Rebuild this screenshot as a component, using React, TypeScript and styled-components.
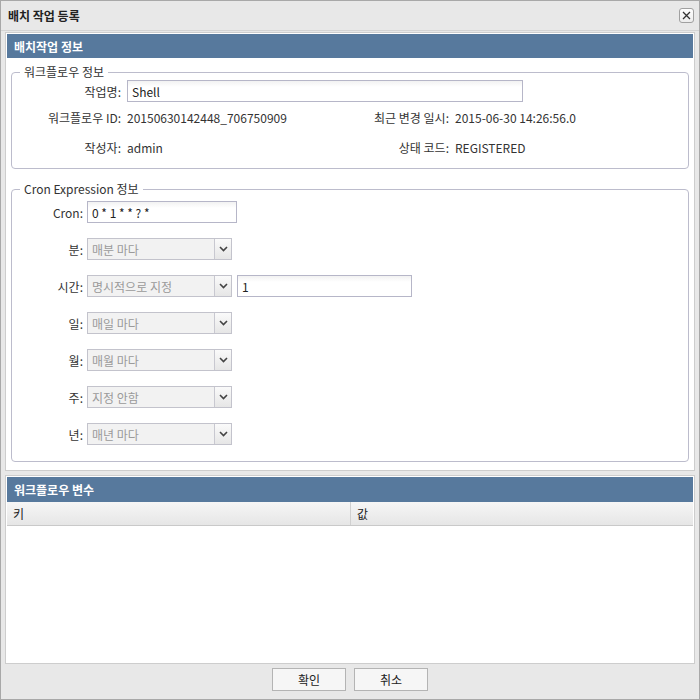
import styled, { createGlobalStyle } from 'styled-components';

const GlobalStyle = createGlobalStyle`
  html, body {
    margin: 0;
    padding: 0;
    background: #ffffff;
  }
  body {
    font-family: "Noto Sans CJK KR", "Liberation Sans", sans-serif;
    font-size: 12px;
    color: #333333;
  }
  * {
    box-sizing: border-box;
  }
`;

const Dialog = styled.div`
  width: 700px;
  height: 700px;
  display: flex;
  flex-direction: column;
  border: 1px solid #a8a8a8;
  background: #e8e8e8;
`;

const TitleBar = styled.div`
  height: 30px;
  flex: none;
  display: flex;
  align-items: center;
  justify-content: space-between;
  padding: 0 5px 0 7px;
  border-bottom: 1px solid #d4d4d4;
  font-weight: bold;
  color: #222222;
`;

const CloseButton = styled.button`
  width: 15px;
  height: 15px;
  padding: 0;
  display: flex;
  align-items: center;
  justify-content: center;
  border: 1px solid #a0a0a0;
  border-radius: 3px;
  background: linear-gradient(#ffffff, #ececec);
  cursor: pointer;
`;

const Body = styled.div`
  flex: 1;
  display: flex;
  flex-direction: column;
  padding: 1px 4px 0 4px;
`;

const Panel = styled.section<{ $grow?: boolean }>`
  background: #ffffff;
  border: 1px solid #cdcdcd;
  padding: 1px;
  ${(props) => (props.$grow ? 'flex: 1; display: flex; flex-direction: column;' : '')}
  & + & {
    margin-top: 4px;
  }
`;

const PanelHeader = styled.h2<{ $height?: number }>`
  margin: 0;
  height: ${(props) => props.$height ?? 24}px;
  display: flex;
  align-items: center;
  padding: 0 7px;
  background: #57799d;
  color: #ffffff;
  font-size: 12px;
  font-weight: bold;
`;

const FieldSet = styled.fieldset<{ $top: number; $pad: string }>`
  margin: ${(props) => props.$top}px 4px 0 4px;
  padding: ${(props) => props.$pad};
  border: 1px solid #bcbccc;
  border-radius: 4px;
  min-width: 0;

  legend {
    margin-left: 8px;
    padding: 0 4px;
    line-height: 14px;
    color: #333333;
  }
`;

const InfoGrid = styled.div`
  display: grid;
  grid-template-columns: 109px 206px 110px 1fr;
  grid-template-rows: 24px 28px 32px;
  column-gap: 6px;
  align-items: center;
`;

const Label = styled.span`
  text-align: right;
  white-space: nowrap;
`;

const Value = styled.span`
  white-space: nowrap;
`;

const WideCell = styled.div`
  grid-column: span 3;
`;

const TextInput = styled.div<{ $width: number }>`
  width: ${(props) => props.$width}px;
  height: 22px;
  display: flex;
  align-items: center;
  padding: 0 4px;
  border: 1px solid #b6b6c8;
  background: linear-gradient(#f2f2f2, #ffffff 6px);
  color: #222222;
`;

const CronRows = styled.div`
  display: flex;
  flex-direction: column;
  gap: 15px;
`;

const CronRow = styled.div`
  display: flex;
  align-items: center;
  height: 22px;
`;

const CronLabel = styled.span`
  width: 71px;
  margin-right: 4px;
  text-align: right;
`;

const Select = styled.div`
  width: 145px;
  height: 22px;
  display: flex;
  border: 1px solid #c3c3cc;
  background: #f2f2f2;
  color: #9a9a9a;
  & + div {
    margin-left: 5px;
  }
`;

const SelectText = styled.span`
  flex: 1;
  display: flex;
  align-items: center;
  padding: 0 4px;
`;

const SelectArrow = styled.span`
  width: 17px;
  display: flex;
  align-items: center;
  justify-content: center;
  border-left: 1px solid #c8c8d0;
  background: linear-gradient(#fafafa, #e6e6e6);
`;

const Spacer = styled.div`
  height: 7px;
`;

const VarHeaderRow = styled.div`
  display: grid;
  grid-template-columns: 343px 1fr;
  height: 24px;
  background: linear-gradient(#f6f6f6, #e6e6e6);
  border-bottom: 1px solid #c9c9c9;
`;

const VarHeaderCell = styled.div`
  display: flex;
  align-items: center;
  padding: 0 6px;
  color: #222222;
  & + & {
    border-left: 1px solid #d0d0d0;
  }
`;

const VarBody = styled.div`
  flex: 1;
`;

const Footer = styled.div`
  height: 35px;
  flex: none;
  display: flex;
  justify-content: center;
  align-items: flex-start;
  gap: 8px;
  padding-top: 4px;
`;

const Button = styled.button`
  width: 74px;
  height: 23px;
  padding: 0;
  border: 1px solid #b4b4b4;
  background: #f6f6f6;
  font-family: inherit;
  font-size: 12px;
  color: #222222;
  cursor: pointer;
`;

const Chevron = () => (
  <svg width="9" height="6" viewBox="0 0 9 6">
    <path d="M1 1 L4.5 4.5 L8 1" fill="none" stroke="#444" strokeWidth="1.6" />
  </svg>
);

const cronSelects = [
  { label: '분', value: '매분 마다' },
  { label: '시간', value: '명시적으로 지정', extra: '1' },
  { label: '일', value: '매일 마다' },
  { label: '월', value: '매월 마다' },
  { label: '주', value: '지정 안함' },
  { label: '년', value: '매년 마다' },
];

export default function App() {
  return (
    <>
      <GlobalStyle />
      <Dialog>
        <TitleBar>
          <span>배치 작업 등록</span>
          <CloseButton aria-label="닫기">
            <svg width="9" height="9" viewBox="0 0 9 9">
              <path d="M1 1 L8 8 M8 1 L1 8" stroke="#333" strokeWidth="1.3" />
            </svg>
          </CloseButton>
        </TitleBar>
        <Body>
          <Panel>
            <PanelHeader>배치작업 정보</PanelHeader>
            <FieldSet $top={7} $pad="0 0 5px 0">
              <legend>워크플로우 정보</legend>
              <InfoGrid>
                <Label>작업명:</Label>
                <WideCell>
                  <TextInput $width={396}>Shell</TextInput>
                </WideCell>
                <Label>워크플로우 ID:</Label>
                <Value>20150630142448_706750909</Value>
                <Label>최근 변경 일시:</Label>
                <Value>2015-06-30 14:26:56.0</Value>
                <Label>작성자:</Label>
                <Value>admin</Value>
                <Label>상태 코드:</Label>
                <Value>REGISTERED</Value>
              </InfoGrid>
            </FieldSet>
            <FieldSet $top={13} $pad="5px 0 16px 0">
              <legend>Cron Expression 정보</legend>
              <CronRows>
                <CronRow>
                  <CronLabel>Cron:</CronLabel>
                  <TextInput $width={150}>0 * 1 * * ? *</TextInput>
                </CronRow>
                {cronSelects.map((item) => (
                  <CronRow key={item.label}>
                    <CronLabel>{item.label}:</CronLabel>
                    <Select>
                      <SelectText>{item.value}</SelectText>
                      <SelectArrow>
                        <Chevron />
                      </SelectArrow>
                    </Select>
                    {item.extra && <TextInput $width={175}>{item.extra}</TextInput>}
                  </CronRow>
                ))}
              </CronRows>
            </FieldSet>
            <Spacer />
          </Panel>
          <Panel $grow>
            <PanelHeader $height={25}>워크플로우 변수</PanelHeader>
            <VarHeaderRow>
              <VarHeaderCell>키</VarHeaderCell>
              <VarHeaderCell>값</VarHeaderCell>
            </VarHeaderRow>
            <VarBody />
          </Panel>
        </Body>
        <Footer>
          <Button>확인</Button>
          <Button>취소</Button>
        </Footer>
      </Dialog>
    </>
  );
}
